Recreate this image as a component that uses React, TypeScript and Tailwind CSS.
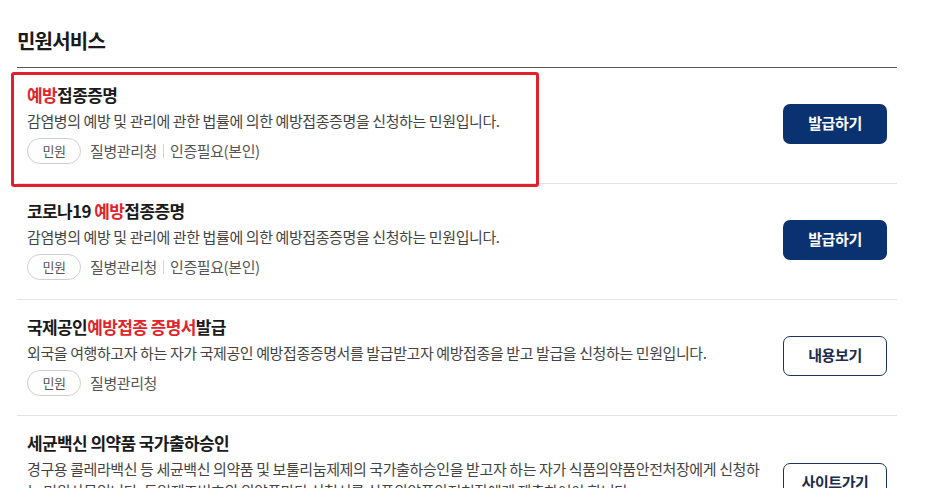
import React from 'react';

interface Service {
  title: React.ReactNode;
  desc: string;
  agency?: string;
  auth?: string;
  action: string;
  primary: boolean;
}

const Red: React.FC<{ children: React.ReactNode }> = ({ children }) => (
  <span className="text-[#e1242b]">{children}</span>
);

const services: Service[] = [
  {
    title: (
      <>
        <Red>예방</Red>접종증명
      </>
    ),
    desc: '감염병의 예방 및 관리에 관한 법률에 의한 예방접종증명을 신청하는 민원입니다.',
    agency: '질병관리청',
    auth: '인증필요(본인)',
    action: '발급하기',
    primary: true,
  },
  {
    title: (
      <>
        코로나19 <Red>예방</Red>접종증명
      </>
    ),
    desc: '감염병의 예방 및 관리에 관한 법률에 의한 예방접종증명을 신청하는 민원입니다.',
    agency: '질병관리청',
    auth: '인증필요(본인)',
    action: '발급하기',
    primary: true,
  },
  {
    title: (
      <>
        국제공인<Red>예방접종 증명서</Red>발급
      </>
    ),
    desc: '외국을 여행하고자 하는 자가 국제공인 예방접종증명서를 발급받고자 예방접종을 받고 발급을 신청하는 민원입니다.',
    agency: '질병관리청',
    action: '내용보기',
    primary: false,
  },
  {
    title: '세균백신 의약품 국가출하승인',
    desc: '경구용 콜레라백신 등 세균백신 의약품 및 보툴리눔제제의 국가출하승인을 받고자 하는 자가 식품의약품안전처장에게 신청하는 민원사무입니다. 동일제조번호의 의약품마다 신청서를 식품의약품안전처장에게 제출하여야 합니다.',
    agency: '식품의약품안전처',
    action: '사이트가기',
    primary: false,
  },
];

const ServiceRow: React.FC<{ item: Service }> = ({ item }) => (
  <li className="flex items-center gap-5 border-b border-[#e3e3e3] pl-[10px] pr-[10px] pt-[15px] pb-[19px]">
    <div className="flex-1 min-w-0">
      <h3 className="text-[17px] leading-[24px] font-bold text-[#1a1a1a] tracking-[-0.6px]">{item.title}</h3>
      <p className="mt-[3px] text-[15px] leading-[22px] text-[#444] tracking-[-0.4px]">{item.desc}</p>
      <div className="mt-[6px] flex items-center text-[15px] text-[#555] tracking-[-0.4px]">
        <span className="inline-flex h-[26px] w-[54px] items-center justify-center rounded-full border border-[#cfcfcf] text-[13px] text-[#555]">
          민원
        </span>
        <span className="ml-[9px]">{item.agency}</span>
        {item.auth && (
          <>
            <span className="mx-[6px] h-[14px] w-px bg-[#d5d5d5]" />
            <span>{item.auth}</span>
          </>
        )}
      </div>
    </div>
    {item.primary ? (
      <button className="h-[40px] w-[104px] shrink-0 rounded-[7px] bg-[#0b3270] text-[15px] font-bold text-white tracking-[-0.4px]">
        {item.action}
      </button>
    ) : (
      <button className="h-[40px] w-[104px] shrink-0 rounded-[7px] border border-[#1d3260] bg-white text-[15px] font-bold text-[#1d2b4d] tracking-[-0.4px]">
        {item.action}
      </button>
    )}
  </li>
);

const App: React.FC = () => {
  return (
    <div
      className="min-h-screen bg-white pl-[17px] pt-[26px]"
      style={{ fontFamily: '"Noto Sans CJK KR", "Noto Sans", sans-serif' }}
    >
      <div className="w-[880px]">
        <h2 className="text-[20px] leading-[30px] font-bold text-[#1a1a1a] tracking-[-0.8px] pb-[11px]">민원서비스</h2>
        <ul className="relative border-t border-[#5a5a5a]">
          {services.map((s, i) => (
            <ServiceRow key={i} item={s} />
          ))}
          {/* highlight box over the first row */}
          <div className="pointer-events-none absolute left-[-6px] top-[4px] h-[115px] w-[528px] rounded-[3px] border-[3px] border-[#e0202a]" />
        </ul>
      </div>
    </div>
  );
};

export default App;
